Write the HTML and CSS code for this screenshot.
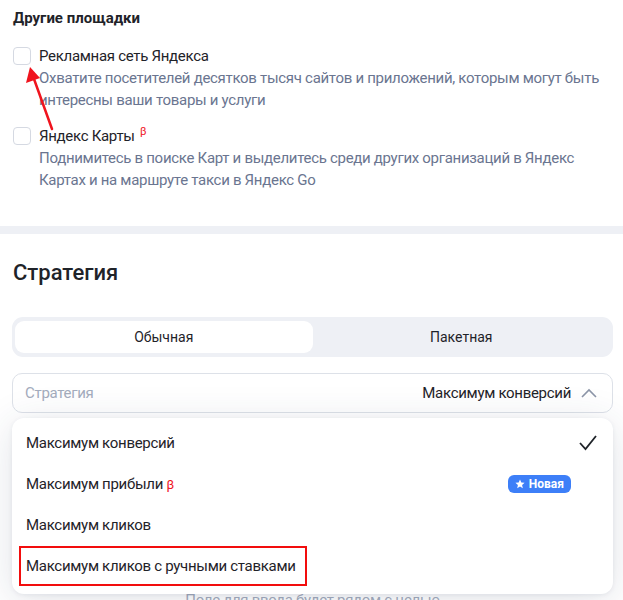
FILE: index.html
```html
<!DOCTYPE html>
<html lang="ru">
  <head>
    <meta charset="UTF-8" />
    <meta name="viewport" content="width=device-width, initial-scale=1.0" />
    <title>Настройки кампании</title>
    <link rel="stylesheet" href="styles.css">
  </head>
  <body>
    <section class="card placesCard">
      <h3 class="blockTitle">Другие площадки</h3>

      <div class="option">
        <span class="checkbox"></span>
        <div class="optionText">
          <div class="optionName">Рекламная сеть Яндекса</div>
          <div class="optionDesc">Охватите посетителей десятков тысяч сайтов и приложений, которым могут быть интересны ваши товары и услуги</div>
        </div>
        <svg class="arrow" width="40" height="70" viewBox="0 0 40 70">
          <line x1="31" y1="68" x2="13" y2="18" stroke="#f0141e" stroke-width="2.5" stroke-linecap="round" />
          <polygon points="9,6 5,22 19,17" fill="#f0141e" />
        </svg>
      </div>

      <div class="option">
        <span class="checkbox"></span>
        <div class="optionText">
          <div class="optionName">Яндекс Карты <sup class="beta">β</sup></div>
          <div class="optionDesc">Поднимитесь в поиске Карт и выделитесь среди других организаций в Яндекс Картах и на маршруте такси в Яндекс Go</div>
        </div>
      </div>
    </section>

    <div class="divider"></div>

    <section class="card strategyCard">
      <h2 class="sectionTitle">Стратегия</h2>

      <div class="tabs">
        <div class="tab active">Обычная</div>
        <div class="tab">Пакетная</div>
      </div>

      <div class="selectWrap">
        <div class="select">
          <span class="selectLabel">Стратегия</span>
          <span class="selectValue">Максимум конверсий</span>
          <svg class="chevron" width="16" height="10" viewBox="0 0 16 10">
            <polyline points="1,9 8,2 15,9" fill="none" stroke="#8c95a8" stroke-width="1.6" />
          </svg>
        </div>

        <ul class="menu">
          <li class="menuItem">
            <span>Максимум конверсий</span>
            <svg class="check" width="18" height="16" viewBox="0 0 18 16">
              <polyline points="1,8 6.5,14 17,1" fill="none" stroke="#1f2329" stroke-width="1.8" />
            </svg>
          </li>
          <li class="menuItem">
            <span>Максимум прибыли <span class="betaInline">β</span></span>
            <span class="badge">
              <svg width="10" height="10" viewBox="0 0 24 24">
                <polygon points="12,1 15.2,8.3 23,9 17,14.3 18.8,22 12,18 5.2,22 7,14.3 1,9 8.8,8.3" fill="#fff" />
              </svg>
              Новая
            </span>
          </li>
          <li class="menuItem"><span>Максимум кликов</span></li>
          <li class="menuItem"><span class="marked">Максимум кликов с ручными ставками</span></li>
        </ul>
      </div>

      <p class="hint">Поле для ввода будет рядом с целью</p>
    </section>
  </body>
</html>
```

FILE: styles.css
```css
body {
  margin: 0;
  background: #fff;
  font-family: Roboto, "Noto Sans", sans-serif;
  color: #1f2329;
  overflow: hidden;
}

.card {
  background: #fff;
  padding: 0 10px 0 13px;
}

.placesCard {
  padding-top: 8px;
  padding-bottom: 35px;
}

.blockTitle {
  margin: 0 0 17px;
  font-size: 15px;
  line-height: 20px;
  font-weight: 700;
}

.option {
  position: relative;
  display: flex;
  align-items: flex-start;
  margin-bottom: 14px;
}

.option:last-child {
  margin-bottom: 0;
}

.checkbox {
  flex: none;
  width: 16px;
  height: 16px;
  margin-top: 2px;
  margin-right: 8px;
  border: 1px solid #d5d9e2;
  border-radius: 4px;
  background: #fff;
}

.optionText {
  font-size: 15px;
  line-height: 22px;
  letter-spacing: -0.3px;
}

.optionDesc {
  color: #6a7590;
}

.beta {
  color: #f0141e;
  font-size: 11px;
  vertical-align: 6px;
  line-height: 0;
  margin-left: 2px;
}

.arrow {
  position: absolute;
  left: 8px;
  top: 16px;
}

.divider {
  height: 8px;
  background: #eef0f5;
}

.strategyCard {
  padding: 27px 10px 0 12px;
  height: 380px;
}

.sectionTitle {
  margin: 0 0 32px;
  font-size: 22px;
  line-height: 24px;
  font-weight: 500;
  padding-left: 1px;
}

.tabs {
  display: flex;
  padding: 4px 3px;
  background: #eef0f5;
  border-radius: 11px;
}

.tab {
  flex: 1;
  text-align: center;
  height: 32px;
  line-height: 32px;
  font-size: 14px;
  border-radius: 9px;
}

.tab.active {
  background: #fff;
}

.selectWrap {
  position: relative;
  margin-top: 16px;
  letter-spacing: -0.3px;
}

.select {
  display: flex;
  align-items: center;
  height: 38px;
  padding: 0 13px 0 12px;
  border: 1px solid #dde1e8;
  border-radius: 10px;
  font-size: 15px;
}

.selectLabel {
  color: #a4acbd;
  flex: 1;
}

.selectValue {
  margin-right: 10px;
}

.chevron {
  margin-right: 2px;
}

.menu {
  position: absolute;
  left: 0;
  right: 0;
  top: 45px;
  margin: 0;
  padding: 4px 0 8px;
  list-style: none;
  background: #fff;
  border-radius: 12px;
  box-shadow: 0 6px 40px rgba(40, 55, 90, 0.14), 0 1px 4px rgba(40, 55, 90, 0.08);
  z-index: 2;
}

.menuItem {
  display: flex;
  align-items: center;
  justify-content: space-between;
  height: 41px;
  padding: 0 16px 0 14px;
  font-size: 15px;
}

.betaInline {
  color: #f0141e;
  font-size: 13px;
}

.badge {
  display: flex;
  align-items: center;
  gap: 4px;
  height: 18px;
  padding: 0 7px;
  margin-right: 26px;
  background: #3d7ff8;
  color: #fff;
  font-size: 12px;
  font-weight: 700;
  letter-spacing: 0;
  border-radius: 6px;
}

.marked {
  margin-left: -7px;
  padding: 0 9px 0 5px;
  height: 36px;
  line-height: 36px;
  border: 2px solid #f20d0d;
}

.hint {
  margin: 178px 0 0;
  text-align: center;
  color: #a4acbd;
  font-size: 15px;
  letter-spacing: -0.3px;
}
```
